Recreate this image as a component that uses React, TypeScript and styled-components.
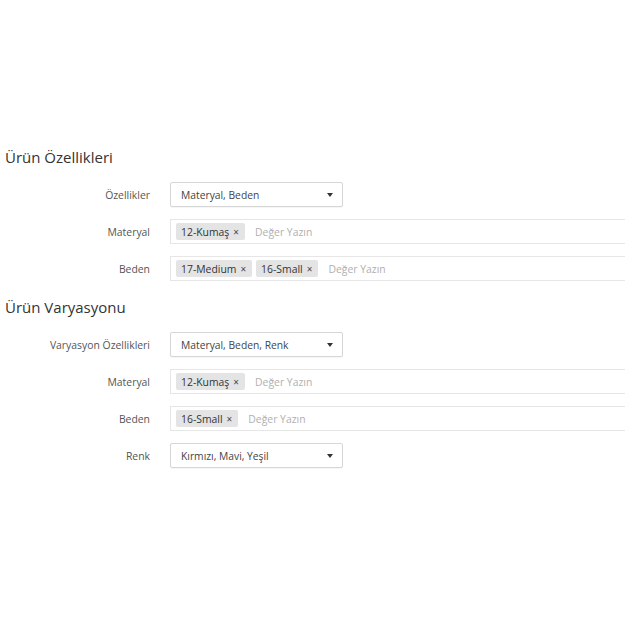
import React from "react";
import styled, { createGlobalStyle } from "styled-components";

const Global = createGlobalStyle`
  html, body { margin: 0; padding: 0; background: #fff; }
  body { font-family: "Open Sans", "DejaVu Sans", sans-serif; color: #555; }
`;

const Page = styled.div`
  width: 625px;
  height: 625px;
  overflow: hidden;
  padding-top: 147px;
  box-sizing: border-box;
`;

const Section = styled.section`
  display: flex;
  flex-direction: column;
  gap: 12px;
  margin-bottom: 16px;
`;

const Heading = styled.h2`
  margin: 0 0 3px 5px;
  font-size: 15px;
  font-weight: 400;
  line-height: 20px;
  color: #333;
`;

const Row = styled.div`
  display: grid;
  grid-template-columns: 150px 1fr;
  column-gap: 20px;
  align-items: center;
  height: 25px;
`;

const Label = styled.label`
  text-align: right;
  font-size: 10.4px;
  color: #555;
`;

const Select = styled.div`
  width: 173px;
  height: 25px;
  box-sizing: border-box;
  border: 1px solid #d6d6d6;
  border-radius: 2px;
  box-shadow: 0 1px 1px rgba(0, 0, 0, 0.04);
  display: flex;
  align-items: center;
  justify-content: space-between;
  padding: 0 9px 0 10px;
  font-size: 10.3px;
  color: #444;
`;

const Caret = styled.span`
  width: 0;
  height: 0;
  border-left: 3.5px solid transparent;
  border-right: 3.5px solid transparent;
  border-top: 4px solid #333;
`;

const TagBox = styled.div`
  width: 470px;
  height: 25px;
  box-sizing: border-box;
  border: 1px solid #e6e6e6;
  border-right: none;
  display: flex;
  align-items: center;
  gap: 4px;
  padding: 0 5px;
`;

const Chip = styled.span`
  display: inline-flex;
  align-items: center;
  height: 17px;
  padding: 0 6px 0 5px;
  background: #e4e4e4;
  border-radius: 2px;
  font-size: 10.4px;
  color: #333;
  white-space: nowrap;
`;

const Remove = styled.span`
  margin-left: 4px;
  font-size: 10px;
  color: #444;
`;

const Placeholder = styled.span`
  margin-left: 6px;
  font-size: 10.4px;
  color: #b0b0b0;
`;

type Field =
  | { label: string; kind: "select"; value: string }
  | { label: string; kind: "tags"; tags: string[] };

const sections: { title: string; fields: Field[] }[] = [
  {
    title: "Ürün Özellikleri",
    fields: [
      { label: "Özellikler", kind: "select", value: "Materyal, Beden" },
      { label: "Materyal", kind: "tags", tags: ["12-Kumaş"] },
      { label: "Beden", kind: "tags", tags: ["17-Medium", "16-Small"] },
    ],
  },
  {
    title: "Ürün Varyasyonu",
    fields: [
      { label: "Varyasyon Özellikleri", kind: "select", value: "Materyal, Beden, Renk" },
      { label: "Materyal", kind: "tags", tags: ["12-Kumaş"] },
      { label: "Beden", kind: "tags", tags: ["16-Small"] },
      { label: "Renk", kind: "select", value: "Kırmızı, Mavi, Yeşil" },
    ],
  },
];

export default function App() {
  return (
    <Page>
      <Global />
      {sections.map((s) => (
        <Section key={s.title}>
          <Heading>{s.title}</Heading>
          {s.fields.map((f, i) => (
            <Row key={i}>
              <Label>{f.label}</Label>
              {f.kind === "select" ? (
                <Select>
                  <span>{f.value}</span>
                  <Caret />
                </Select>
              ) : (
                <TagBox>
                  {f.tags.map((t) => (
                    <Chip key={t}>
                      {t}
                      <Remove>×</Remove>
                    </Chip>
                  ))}
                  <Placeholder>Değer Yazın</Placeholder>
                </TagBox>
              )}
            </Row>
          ))}
        </Section>
      ))}
    </Page>
  );
}
